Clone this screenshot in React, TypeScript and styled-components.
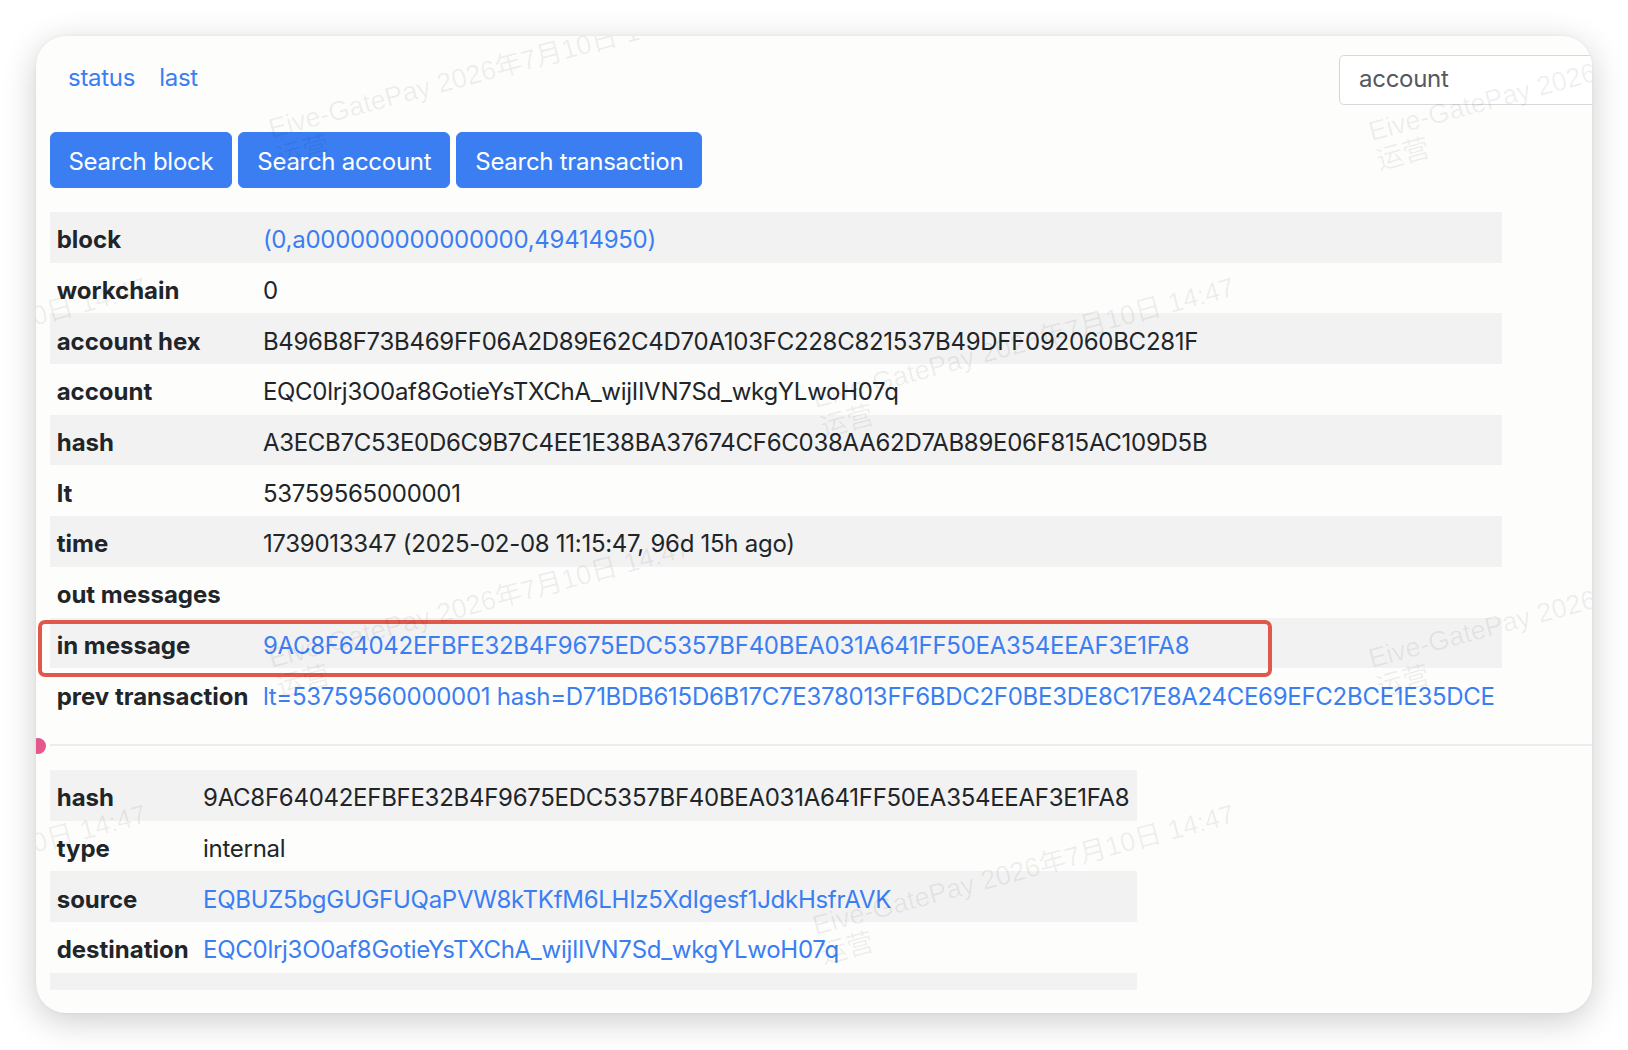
import React from 'react';
import styled, { createGlobalStyle } from 'styled-components';

const blue = '#3a7ef2';

const GlobalStyle = createGlobalStyle`
  html, body {
    margin: 0;
    padding: 0;
    background: #ffffff;
  }
  body {
    font-family: Inter, "Liberation Sans", "Noto Sans CJK SC", sans-serif;
  }
`;

type Row = { label: string; value?: string; link?: boolean };

const txRows: Row[] = [
  { label: 'block', value: '(0,a000000000000000,49414950)', link: true },
  { label: 'workchain', value: '0' },
  { label: 'account hex', value: 'B496B8F73B469FF06A2D89E62C4D70A103FC228C821537B49DFF092060BC281F' },
  { label: 'account', value: 'EQC0lrj3O0af8GotieYsTXChA_wijIIVN7Sd_wkgYLwoH07q' },
  { label: 'hash', value: 'A3ECB7C53E0D6C9B7C4EE1E38BA37674CF6C038AA62D7AB89E06F815AC109D5B' },
  { label: 'lt', value: '53759565000001' },
  { label: 'time', value: '1739013347 (2025-02-08 11:15:47, 96d 15h ago)' },
  { label: 'out messages' },
  { label: 'in message', value: '9AC8F64042EFBFE32B4F9675EDC5357BF40BEA031A641FF50EA354EEAF3E1FA8', link: true },
  {
    label: 'prev transaction',
    value: 'lt=53759560000001 hash=D71BDB615D6B17C7E378013FF6BDC2F0BE3DE8C17E8A24CE69EFC2BCE1E35DCE',
    link: true,
  },
];

const msgRows: Row[] = [
  { label: 'hash', value: '9AC8F64042EFBFE32B4F9675EDC5357BF40BEA031A641FF50EA354EEAF3E1FA8' },
  { label: 'type', value: 'internal' },
  { label: 'source', value: 'EQBUZ5bgGUGFUQaPVW8kTKfM6LHIz5XdIgesf1JdkHsfrAVK', link: true },
  { label: 'destination', value: 'EQC0lrj3O0af8GotieYsTXChA_wijIIVN7Sd_wkgYLwoH07q', link: true },
  { label: 'lt', value: '53759565000000' },
];

// watermark anchors, card coords of the first baseline start
const marks = [
  [236, 104],
  [1336, 107],
  [780, 374],
  [-308, 374],
  [236, 634],
  [1336, 634],
  [780, 901],
  [-308, 901],
];

export default function App() {
  return (
    <>
      <GlobalStyle />
      <Stage>
        <Card>
          <Viewport>
            <Header>
              <Nav>
                <NavLink href="#">status</NavLink>
                <NavLink href="#">last</NavLink>
              </Nav>
              <SearchInput placeholder="account" />
            </Header>
            <Buttons>
              <Button>Search block</Button>
              <Button>Search account</Button>
              <Button>Search transaction</Button>
            </Buttons>
            <InfoTable rows={txRows} />
            <Rule />
            <InfoTable rows={msgRows} />
          </Viewport>
          <PinkDot />
          <Highlight />
          {marks.map(([x, y], i) => (
            <Watermark key={i} $x={x} $y={y}>
              Eive-GatePay 2026年7月10日 14:47
              <br />
              运营
            </Watermark>
          ))}
        </Card>
      </Stage>
    </>
  );
}

const InfoTable = ({ rows }: { rows: Row[] }) => (
  <Table>
    <tbody>
      {rows.map((r) => (
        <tr key={r.label}>
          <th>{r.label}</th>
          <td>{r.link ? <Link href="#">{r.value}</Link> : r.value}</td>
        </tr>
      ))}
    </tbody>
  </Table>
);

const Stage = styled.div`
  padding: 36px 0 0 36px;
  height: 1050px;
  box-sizing: border-box;
`;

const Card = styled.div`
  position: relative;
  width: 1556px;
  height: 977px;
  border-radius: 30px;
  background: #fdfdfc;
  box-shadow: 0 8px 34px rgba(0, 0, 0, 0.2), 0 0 3px rgba(0, 0, 0, 0.06);
  overflow: hidden;
`;

const Viewport = styled.div`
  height: 954px;
  overflow: hidden;
  padding-left: 13.5px;
  box-sizing: border-box;
  color: #212529;
  font-size: 24px;
  line-height: 36px;
  letter-spacing: -0.28px;
`;

const Header = styled.div`
  display: flex;
  align-items: center;
  height: 50px;
  margin-top: 19px;
  margin-right: -60px;
`;

const Nav = styled.nav`
  display: flex;
  gap: 24px;
  padding-left: 18.5px;
  margin-top: -4px;
`;

const NavLink = styled.a`
  color: ${blue};
  text-decoration: none;
`;

const SearchInput = styled.input`
  margin-left: auto;
  width: 313px;
  height: 50px;
  box-sizing: border-box;
  padding: 0 19px 4px;
  border: 1px solid #d6d9dc;
  border-radius: 5px;
  background: #ffffff;
  font: inherit;
  font-size: 24px;
  letter-spacing: -0.28px;
  outline: none;

  &::placeholder {
    color: #55595e;
  }
`;

const Buttons = styled.div`
  display: flex;
  gap: 6px;
  margin-top: 27px;
`;

const Button = styled.button`
  background: ${blue};
  color: #ffffff;
  border: 1px solid ${blue};
  border-radius: 6px;
  padding: 11px 18px 7px;
  font: inherit;
  font-size: 24px;
  line-height: 36px;
  letter-spacing: -0.28px;
  cursor: pointer;
`;

const Table = styled.table`
  border-collapse: collapse;
  margin-top: 24px;

  tr:nth-child(odd) {
    background: #f2f2f2;
  }

  th,
  td {
    padding: 10.35px 7.2px 4.35px;
    text-align: left;
    vertical-align: top;
    white-space: nowrap;
  }

  th {
    font-weight: 700;
    letter-spacing: 0;
  }
`;

const Link = styled.a`
  color: ${blue};
  text-decoration: none;
`;

const Rule = styled.hr`
  border: 0;
  border-top: 2px solid #ececec;
  margin: 25px 0 0 0;
`;

const PinkDot = styled.span`
  position: absolute;
  left: -8px;
  top: 700px;
  width: 16px;
  height: 16px;
  border-radius: 50%;
  background: #e6588c;
  border: 2px solid #ffffff;
  box-sizing: content-box;
`;

const Highlight = styled.div`
  position: absolute;
  left: 2px;
  top: 584px;
  width: 1234px;
  height: 57px;
  box-sizing: border-box;
  border: 4px solid #e0574c;
  border-radius: 7px;
  pointer-events: none;
`;

const Watermark = styled.div<{ $x: number; $y: number }>`
  position: absolute;
  left: ${(p) => p.$x}px;
  top: ${(p) => p.$y - 26}px;
  transform: rotate(-15deg);
  transform-origin: 0 26px;
  font-family: "Liberation Sans", "Noto Sans CJK SC", sans-serif;
  font-size: 27px;
  line-height: 30px;
  white-space: nowrap;
  color: rgba(0, 0, 0, 0.065);
  pointer-events: none;
`;
